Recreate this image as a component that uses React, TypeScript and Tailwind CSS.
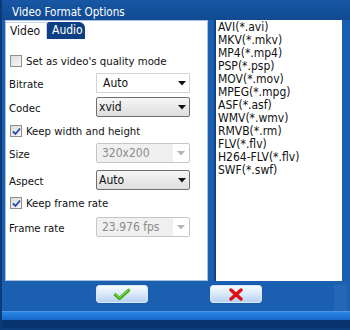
import React from "react";

const formats = [
  "AVI(*.avi)",
  "MKV(*.mkv)",
  "MP4(*.mp4)",
  "PSP(*.psp)",
  "MOV(*.mov)",
  "MPEG(*.mpg)",
  "ASF(*.asf)",
  "WMV(*.wmv)",
  "RMVB(*.rm)",
  "FLV(*.flv)",
  "H264-FLV(*.flv)",
  "SWF(*.swf)",
];

function Arrow({ disabled }: { disabled?: boolean }) {
  return (
    <svg width="8" height="5" viewBox="0 0 8 5" className="shrink-0">
      <path d="M0 0 L8 0 L4 4.5 Z" fill={disabled ? "#b4b4b4" : "#111"} />
    </svg>
  );
}

function Check({ checked }: { checked?: boolean }) {
  return (
    <div className="w-[12px] h-[12px] border border-[#8f8f8f] bg-gradient-to-br from-[#dcdcdc] to-[#f8f8f8] flex items-center justify-center shrink-0">
      {checked && (
        <svg width="9" height="9" viewBox="0 0 9 9">
          <path d="M1 4.5 L3.5 7 L8 1.5" stroke="#2448b0" strokeWidth="1.8" fill="none" />
        </svg>
      )}
    </div>
  );
}

function CheckRow({ label, checked, className }: { label: string; checked?: boolean; className?: string }) {
  return (
    <div className={"flex items-center h-[14px] pl-[4px] gap-[4px] " + (className ?? "")}>
      <Check checked={checked} />
      <span className="text-[#111] text-[11.3px]">{label}</span>
    </div>
  );
}

type Kind = "plain" | "combo" | "disabled";

function SelectRow({ label, value, kind, className }: { label: string; value: string; kind: Kind; className?: string }) {
  let box = "";
  if (kind === "plain") box = "bg-white border border-[#d4d4d4] pl-[6px]";
  if (kind === "combo") box = "bg-gradient-to-b from-[#f6f6f6] to-[#dedede] border border-[#6f6f6f] rounded-[2px] pl-[2px]";
  if (kind === "disabled") box = "bg-white border border-[#c6c6c6] rounded-[2px]";
  return (
    <div className={"flex items-center h-[20px] " + (className ?? "")}>
      <span className="w-[90px] pl-[3px] pt-[3px] text-[#111] text-[11.3px]">{label}</span>
      <div className={"w-[94px] h-[20px] flex items-center text-[12px] " + box}>
        {kind === "disabled" ? (
          <>
            <div className="w-[76px] h-full bg-[#f0f0f0] pl-[5px] flex items-center text-[#8c8c8c]">{value}</div>
            <div className="flex-1 flex justify-center">
              <Arrow disabled />
            </div>
          </>
        ) : (
          <>
            <span className="flex-1 text-[#111]">{value}</span>
            <div className="w-[14px] flex justify-center">
              <Arrow />
            </div>
          </>
        )}
      </div>
    </div>
  );
}

function GlossButton({ children }: { children: React.ReactNode }) {
  return (
    <div className="w-[52px] h-[18px] rounded-[3px] border border-[#dbe8f8] bg-gradient-to-b from-[#f7fbff] via-[#d9e8fa] to-[#b8d3f3] flex items-center justify-center shadow-[0_0_1px_#0b3d7c]">
      {children}
    </div>
  );
}

export default function App() {
  return (
    <div className="w-[350px] h-[330px] bg-[#1b60b0] flex flex-col font-[family-name:DejaVu_Sans_Condensed,Liberation_Sans,sans-serif] text-[11px] leading-[13px] overflow-hidden border-l-2 border-[#0a3a78]">
      {/* Title bar */}
      <div className="h-[20px] bg-gradient-to-b from-[#1857a4] to-[#104a92] text-white text-[11.6px] pl-[10px] pt-[5px] leading-[14px]">
        Video Format Options
      </div>

      {/* Panels */}
      <div className="flex h-[261px] pl-[3px] gap-[6px]">
        <div className="w-[203px] bg-white border border-[#a9c1e0] flex flex-col">
          <div className="flex h-[17px] mt-[1px]">
            <div className="w-[41px] border-t border-r border-[#c5d5ea] pl-[4px] pt-[2px] text-[12px] text-[#111]">Video</div>
            <div className="w-[38px] bg-[#0d3f82] rounded-tr-[6px] rounded-tl-[2px] text-white text-[12px] pl-[5px] pt-[2px]">Audio</div>
          </div>
          <CheckRow label="Set as video's quality mode" className="mt-[15px]" />
          <SelectRow label="Bitrate" value="Auto" kind="plain" className="mt-[5px]" />
          <SelectRow label="Codec" value="xvid" kind="combo" className="mt-[4px]" />
          <CheckRow label="Keep width and height" checked className="mt-[7px]" />
          <SelectRow label="Size" value="320x200" kind="disabled" className="mt-[5px]" />
          <SelectRow label="Aspect" value="Auto" kind="combo" className="mt-[7px]" />
          <CheckRow label="Keep frame rate" checked className="mt-[6px]" />
          <SelectRow label="Frame rate" value="23.976 fps" kind="disabled" className="mt-[7px]" />
        </div>
        <div className="w-[128px] bg-white border-l-2 border-[#0f4387] pl-[2px] pt-[1px] text-[#111] text-[12px]">
          {formats.map((f) => (
            <div key={f} className="h-[13px] leading-[13px] whitespace-nowrap">
              {f}
            </div>
          ))}
        </div>
      </div>

      {/* Buttons */}
      <div className="flex h-[30px] pt-[4px] pl-[94px]">
        <GlossButton>
          <svg width="18" height="12" viewBox="0 0 18 12">
            <path d="M1.5 6 L6.5 10.5 L16.5 1.5" stroke="#48b018" strokeWidth="3.2" fill="none" strokeLinejoin="round" />
            <path d="M2.5 6 L6.5 9.5 L15.5 1.8" stroke="#8fdc5a" strokeWidth="1" fill="none" />
          </svg>
        </GlossButton>
        <div className="w-[62px]" />
        <GlossButton>
          <svg width="14" height="13" viewBox="0 0 14 13">
            <path d="M2 2 L12 11 M12 2 L2 11" stroke="#e01010" strokeWidth="3.4" strokeLinecap="round" />
          </svg>
        </GlossButton>
        <div className="ml-auto mr-[3px] w-[13px] h-[26px] bg-[#2467b4]" />
      </div>

      {/* Bottom bar */}
      <div className="h-px bg-[#4b95e2]" />
      <div className="h-[8px] bg-gradient-to-b from-[#2a86e6] to-[#1467c8]" />
      <div className="h-[8px] bg-[#07336f]" />
      <div className="flex-1 bg-[#0b3d7d]" />
    </div>
  );
}
